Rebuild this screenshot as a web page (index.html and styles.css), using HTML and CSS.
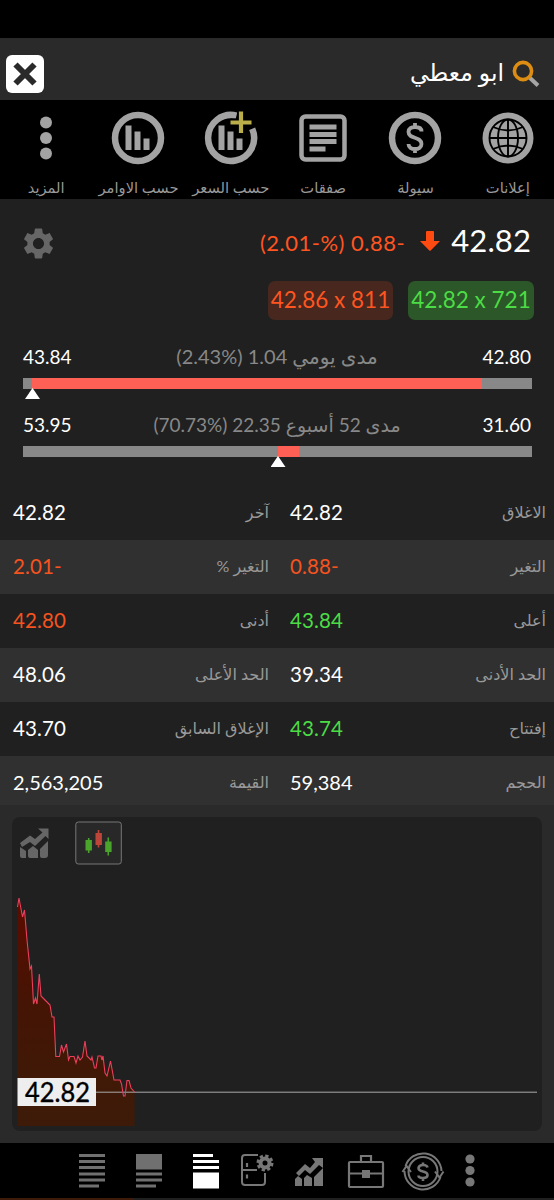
FILE: index.html
```html
<!DOCTYPE html>
<html lang="ar">
<head>
<meta charset="utf-8">
<title>ابو معطي</title>
<link rel="stylesheet" href="styles.css">
</head>
<body>
<div class="app">
  <header class="topbar">
    <svg class="close" viewBox="0 0 40 40"><rect x="1" y="1" width="38" height="38" rx="6" fill="#fff"/><path d="M10.500 10.500L29.500 29.500M29.500 10.500L10.500 29.500" stroke="#2a2a2a" stroke-width="6"/></svg>
    <div class="search">
      <span class="name" dir="rtl">ابو معطي</span>
      <svg width="28" height="28" viewBox="0 0 28 28"><path d="M17.500 17.500L26 25.500" stroke="#a5a5a5" stroke-width="4"/><circle cx="11" cy="11" r="8.600" fill="none" stroke="#dc8d12" stroke-width="3.600"/></svg>
    </div>
  </header>

  <nav class="tools">
    <div class="tool"><svg viewBox="0 0 56 56"><g fill="#a3a3a3"><circle cx="28" cy="12.500" r="6"/><circle cx="28" cy="28" r="6"/><circle cx="28" cy="43.500" r="6"/></g></svg><span dir="rtl">المزيد</span></div>
    <div class="tool"><svg viewBox="0 0 56 56"><circle cx="28" cy="28" r="23" fill="none" stroke="#a3a3a3" stroke-width="6.500"/><path d="M15.500 15.500h6v24.500h-6zM24.500 21.500h6v18.500h-6zM33.500 28.500h6v11.500h-6z" fill="#a3a3a3"/></svg><span dir="rtl">حسب الاوامر</span></div>
    <div class="tool"><svg viewBox="0 0 56 56"><path d="M33.500 5.600A23 23 0 1 0 49.200 18.800" fill="none" stroke="#a3a3a3" stroke-width="6.500"/><path d="M15.500 15.500h6v24.500h-6zM24.500 21.500h6v18.500h-6zM33.500 28.500h6v11.500h-6z" fill="#a3a3a3"/><path d="M38 1.500V23M27.500 12.500H48.500" stroke="#000" stroke-width="8"/><path d="M38 1.500V23M27.500 12.500H48.500" stroke="#b9ae4a" stroke-width="4.200"/></svg><span dir="rtl">حسب السعر</span></div>
    <div class="tool"><svg viewBox="0 0 56 56"><rect x="6.500" y="6.500" width="43" height="43" rx="4" fill="none" stroke="#a3a3a3" stroke-width="4.500"/><path d="M14.500 17H41.500M14.500 24.500H41.500M14.500 31.500H41.500M14.500 39H30.500" stroke="#a3a3a3" stroke-width="4.800"/></svg><span dir="rtl">صفقات</span></div>
    <div class="tool"><svg viewBox="0 0 56 56"><circle cx="28" cy="28" r="23" fill="none" stroke="#a3a3a3" stroke-width="6.500"/><path d="M34.500 21.500C34.500 18 31.500 17 28 17S21.500 18.500 21.500 22C21.500 29.500 34.500 26 34.500 34C34.500 37.500 31.500 39 28 39S21.500 37.500 21.500 34M28 13V17.500M28 38.500V43" fill="none" stroke="#a3a3a3" stroke-width="3.800"/></svg><span dir="rtl">سيولة</span></div>
    <div class="tool"><svg viewBox="0 0 56 56"><circle cx="28" cy="28" r="25.500" fill="#a3a3a3"/><g fill="none" stroke="#000" stroke-width="1.900"><circle cx="28" cy="28" r="18.500"/><ellipse cx="28" cy="28" rx="10" ry="18.500"/><path d="M28 9.500V46.500M9.500 28H46.500M13 17Q28 24 43 17M13 39Q28 32 43 39"/></g></svg><span dir="rtl">إعلانات</span></div>
  </nav>

  <section class="summary">
    <div class="quote">
      <svg class="gear" viewBox="2 2 20 20"><path fill="#666" d="M19.140 12.940c.04-.3.060-.61.060-.94 0-.32-.02-.64-.07-.94l2.030-1.580c.18-.14.230-.41.120-.61l-1.920-3.320c-.12-.22-.37-.29-.59-.22l-2.390.960c-.5-.38-1.030-.7-1.620-.94l-.36-2.540c-.04-.24-.24-.41-.48-.41h-3.840c-.24 0-.43.170-.47.410l-.36 2.540c-.59.240-1.130.570-1.620.940l-2.390-.96c-.22-.08-.47 0-.59.220L2.740 8.870c-.12.210-.08.470.120.610l2.030 1.580c-.05.300-.09.630-.09.940s.02.640.070.940l-2.030 1.580c-.18.140-.23.410-.12.610l1.920 3.320c.12.220.370.290.590.220l2.390-.96c.5.380 1.030.700 1.620.940l.36 2.540c.05.240.240.410.480.410h3.840c.24 0 .44-.17.470-.41l.36-2.540c.59-.24 1.130-.56 1.620-.94l2.390.960c.22.080.470 0 .590-.22l1.920-3.320c.12-.22.070-.47-.12-.61l-2.010-1.580zM12 15.600c-1.980 0-3.600-1.620-3.600-3.600s1.620-3.600 3.600-3.600 3.600 1.620 3.600 3.600-1.620 3.600-3.600 3.600z"/></svg>
      <span class="change">(2.01-%) 0.88-</span>
      <svg class="arrow" viewBox="0 0 20 20"><path d="M6 1Q6 0 7 0H13Q14 0 14 1V10H20L10.700 19.500Q10 20 9.300 19.500L0 10H6Z" fill="#ff4a12"/></svg>
      <span class="price">42.82</span>
    </div>
    <div class="chips"><span class="chip ask">42.86 x 811</span><span class="chip bid">42.82 x 721</span></div>
    <div class="range">
      <div class="range-text"><b>43.84</b><span class="day-text" dir="rtl">مدى يومي <bdi dir="ltr">1.04</bdi> <bdi dir="ltr">(2.43%)</bdi></span><b>42.80</b></div>
      <div class="track"><i class="fill day"></i></div>
      <div class="marker day"></div>
    </div>
    <div class="range">
      <div class="range-text"><b>53.95</b><span dir="rtl">مدى 52 أسبوع <bdi dir="ltr">22.35</bdi> <bdi dir="ltr">(70.73%)</bdi></span><b>31.60</b></div>
      <div class="track"><i class="fill year"></i></div>
      <div class="marker year"></div>
    </div>
  </section>

  <section class="stats">
    <div class="row"><span class="v">42.82</span><span class="l" dir="rtl">آخر</span><span class="v">42.82</span><span class="l" dir="rtl">الاغلاق</span></div>
    <div class="row"><span class="v down">2.01-</span><span class="l" dir="rtl">التغير %</span><span class="v down">0.88-</span><span class="l" dir="rtl">التغير</span></div>
    <div class="row"><span class="v down">42.80</span><span class="l" dir="rtl">أدنى</span><span class="v up">43.84</span><span class="l" dir="rtl">أعلى</span></div>
    <div class="row"><span class="v">48.06</span><span class="l" dir="rtl">الحد الأعلى</span><span class="v">39.34</span><span class="l" dir="rtl">الحد الأدنى</span></div>
    <div class="row"><span class="v">43.70</span><span class="l" dir="rtl">الإغلاق السابق</span><span class="v up">43.74</span><span class="l" dir="rtl">إفتتاح</span></div>
    <div class="row"><span class="v long">2,563,205</span><span class="l" dir="rtl">القيمة</span><span class="v long">59,384</span><span class="l" dir="rtl">الحجم</span></div>
  </section>

  <section class="chart-area">
    <svg class="chart" viewBox="12 817 530 314">
      <defs><linearGradient id="area" x1="0" y1="0" x2="0" y2="1"><stop offset="0" stop-color="#5c0c00"/><stop offset=".45" stop-color="#451404"/><stop offset="1" stop-color="#3d1b08"/></linearGradient></defs>
      <g fill="#666"><path d="M20 847L26 851V858H22Q20 858 20 856ZM28 850L33 846L38 850V858H30Q28 858 28 856ZM40 849L48 841V855Q48 858 45 858H42Q40 858 40 856Z"/><path d="M20 843L30 835.500L35 839L42.500 832.500L38 828.500H48.500V839L45.500 836L35 846L30 842L22 847Z"/></g>
      <rect x="75.800" y="822" width="45.500" height="42" rx="2.500" fill="#282828" stroke="#777"/>
      <path d="M88.700 838V853M108.300 837.500V855.500" stroke="#4aa32a" stroke-width="1.600"/><path d="M85.500 840h6.400v10.500h-6.400zM105.200 841.500h6.400v10.500h-6.400z" fill="#4aa32a"/>
      <path d="M98.500 830V847.500" stroke="#bd4638" stroke-width="1.600"/><path d="M95.500 833h6.400v12h-6.400z" fill="#bd4638"/>
      <path fill="url(#area)" d="M17.500 907L19 898L22.500 917L24.500 910L27 940L30 969L31.500 966L33.500 1004L35.500 998L37 1004L39.300 974L41 996L50 1005L52 1017H54L56 1056.500H59.500L61.500 1045L63.500 1052L66.500 1044L68.500 1060L70 1056.500H74L76 1063L78 1056L81 1060L85 1041L87 1056L91 1060L92 1057L94.500 1068L97 1056.500H103L107 1076L110.500 1061L114 1080H120L122.500 1096H125L127 1080.500H129L131 1088L134.500 1092V1126H17.500Z"/>
      <path d="M96 1092.200H537" stroke="#aaa" stroke-width="1"/>
      <path fill="none" stroke="#eb3f5c" stroke-width="1.100" d="M17.500 907L19 898L22.500 917L24.500 910L27 940L30 969L31.500 966L33.500 1004L35.500 998L37 1004L39.300 974L41 996L44 999L50 1005L52 1017H54L55.800 1056.500H59.500L61.500 1045L63.500 1052L66.500 1044L68.500 1060L70 1056.500H74L76 1063L78 1056L80 1060L82.500 1057L85 1041L87 1056L91 1060L92 1057L94.500 1068H96L98 1056H101L102 1060L103 1056L105 1073L107 1076L110.500 1061L114 1080H120L121.500 1084L123.500 1096H125L127 1080.500H129L131 1088L134.500 1092"/>
      <path d="M17.500 1078H96V1106H17.500Z" fill="#eee"/>
      <text class="tag" x="25" y="1101.500" textLength="65" lengthAdjust="spacingAndGlyphs">42.82</text>
    </svg>
  </section>

  <footer class="dock">
    <svg width="26" height="36" viewBox="0 0 26 36"><path d="M0 2.500H26M0 8.500H26M0 14.500H26M0 21H26M0 27H26M0 33H20" stroke="#707070" stroke-width="3"/></svg>
    <svg width="26" height="36" viewBox="0 0 26 36"><path d="M0 1H26V16.500H0Z" fill="#707070"/><path d="M0 21H26M0 27H26M0 33H20" stroke="#707070" stroke-width="3"/></svg>
    <svg width="26" height="36" viewBox="0 0 26 36"><path d="M0 19.500H26V35.500H0Z" fill="#fff"/><path d="M0 2.500H20M0 8.500H26M0 14.500H26" stroke="#fff" stroke-width="3"/></svg>
    <svg width="34" height="36" viewBox="0 0 34 36"><path d="M18 2H5Q2 2 2 5V29Q2 32 5 32H22Q25 32 25 29V20M2 17H17" fill="none" stroke="#777" stroke-width="2"/><path d="M7 10V14M7 21.500V25.500" stroke="#777" stroke-width="2.200"/><circle cx="25" cy="10" r="4.500" fill="none" stroke="#777" stroke-width="4"/><circle cx="25" cy="10" r="7" fill="none" stroke="#777" stroke-width="3" stroke-dasharray="3.200 2.300"/></svg>
    <svg width="28" height="36" viewBox="0 0 28 36"><path d="M0 26L3 23L7 26V33H0ZM9 25L12 22L17 25V33H9ZM19 24L28 15V33H19Z" fill="#777"/><path d="M1 20L10 11L15 15L20 9L17 5H28V15L24 12L15 21L10 17L4 23Z" fill="#777"/></svg>
    <svg width="38" height="36" viewBox="0 0 38 36"><rect x="2" y="9" width="34" height="25" rx="1" fill="none" stroke="#777" stroke-width="2.200"/><path d="M14 9V3H24V9M2 20.500H36" fill="none" stroke="#777" stroke-width="2.200"/><path d="M15 17H23V25H15Z" fill="#777"/></svg>
    <svg width="44" height="40" viewBox="0 0 44 40"><g fill="none" stroke="#777" stroke-width="2"><path d="M4.500 15A18.500 18.500 0 0 1 40.500 20M39.500 26A18.500 18.500 0 0 1 3.500 20"/><circle cx="22" cy="20.500" r="14.500"/><path d="M1.500 21L5.500 15L10 21M34 20.500L38.500 26.500L42.500 20.500"/><path d="M26.500 16.500Q26 14 22 14T17.500 17C17.500 22 26.500 19 26.500 24Q26.500 27 22 27T17.500 24.500M22 11.500V14M22 27V30" stroke-width="2.600"/></g></svg>
    <svg width="10" height="36" viewBox="0 0 10 36"><g fill="#777"><circle cx="5" cy="6" r="4.600"/><circle cx="5" cy="17.500" r="4.600"/><circle cx="5" cy="29" r="4.600"/></g></svg>
  </footer>
  <div class="edge"></div>
</div>
</body>
</html>
```
FILE: styles.css
```css
* { box-sizing: border-box; }
body { margin: 0; background: #000; }
svg { display: block; flex: none; }
.app {
  width: 554px;
  height: 1200px;
  padding-top: 38px;
  display: flex;
  flex-direction: column;
  overflow: hidden;
  background: #000;
  color: #fff;
  font-family: Lato, "DejaVu Sans", sans-serif;
}
.topbar {
  height: 62px;
  flex: none;
  background: #2a2a2a;
  display: flex;
  justify-content: space-between;
  align-items: center;
  padding: 9px 14px 0 5px;
}
.close { width: 40px; height: 40px; }
.search { display: flex; align-items: center; gap: 8px; }
.name { font-size: 23.5px; line-height: 30px; padding-bottom: 3px; }

.tools {
  height: 99px;
  flex: none;
  display: grid;
  grid-template-columns: repeat(6, 1fr);
  color: #999;
  font-size: 14.7px;
}
.tool { display: flex; flex-direction: column; align-items: center; padding-top: 10px; white-space: nowrap; }
.tool svg { width: 56px; height: 56px; }
.tool span { line-height: 20px; margin-top: 11px; }

.summary { height: 287px; flex: none; background: #202020; padding: 20px 23px 0; }
.quote { height: 44px; display: flex; align-items: center; }
.gear { width: 31px; height: 31px; margin-top: 4px; }
.change { margin-left: auto; color: #ff5520; font-size: 22px; letter-spacing: .5px; margin-top: 3px; }
.arrow { width: 20px; height: 20px; margin: 0 11px 0 15px; }
.price { font-size: 31px; letter-spacing: .1px; padding-bottom: 3px; }
.chips { height: 39px; display: flex; justify-content: flex-end; gap: 15px; margin: 18px -3px 0 0; }
.chip { width: 125px; height: 39px; border-radius: 7px; font-size: 22.5px; line-height: 38px; text-align: center; white-space: nowrap; }
.ask { background: #47271e; color: #ff5520; }
.bid { background: #2b5729; color: #4cdc45; width: 126px; }
.range { height: 68px; }
.chips + .range { margin-top: 23px; }
.range-text { height: 35px; display: flex; justify-content: space-between; align-items: center; color: #888; font-size: 19px; padding-bottom: 9px; }
.range-text b { color: #fff; font-weight: 400; }
.day-text { font-size: 20px; }
.track { height: 11px; background: #888; display: flex; margin: 0 -.5px; }
.fill { background: #ff6055; }
.fill.day { margin-left: 9.5px; width: 450px; }
.fill.year { margin-left: 255px; width: 21.500px; }
.marker { width: 15px; height: 11px; margin-top: -1px; background: #fff; clip-path: polygon(50% 0, 100% 100%, 0 100%); }
.marker.day { margin-left: 2px; }
.marker.year { margin-left: 247.500px; }

.stats { flex: none; height: 319px; overflow: hidden; background: #202020; }
.row {
  height: 54px;
  display: grid;
  grid-template-columns: 100px 156px 21px 90px 166px;
  align-items: center;
  padding: 0 8px 2px 13px;
  white-space: nowrap;
}
.row .v:nth-child(3) { grid-column: 4; }
.row .l:nth-child(4) { grid-column: 5; }
.row:nth-child(even) { background: #303030; }
.v { font-size: 20.5px; letter-spacing: .1px; }
.v.long { font-size: 20px; letter-spacing: 0; }
.l { font-size: 16px; color: #999; }
.up { color: #4cdc45; }
.down { color: #f5531f; }

.chart-area { height: 338px; flex: none; background: #2a2a2a; padding: 12px; }
.chart { width: 530px; height: 314px; background: #202020; border-radius: 8px; }
.tag { font-size: 27px; fill: #000; font-family: Lato, sans-serif; stroke: #000; stroke-width: .4px; }

.dock { height: 55px; flex: none; display: flex; align-items: center; padding-left: 79px; }
.dock svg:nth-child(n+2) { margin-left: 31px; }
.dock svg:nth-child(4) { margin-left: 21px; }
.dock svg:nth-child(5) { margin-left: 21px; }
.dock svg:nth-child(6) { margin-left: 24px; }
.dock svg:nth-child(7) { margin-left: 16px; }
.dock svg:nth-child(8) { margin-left: 20px; }
.edge { height: 2px; flex: none; background: linear-gradient(90deg, #3d1b08 134px, #202020 134px); }
```
